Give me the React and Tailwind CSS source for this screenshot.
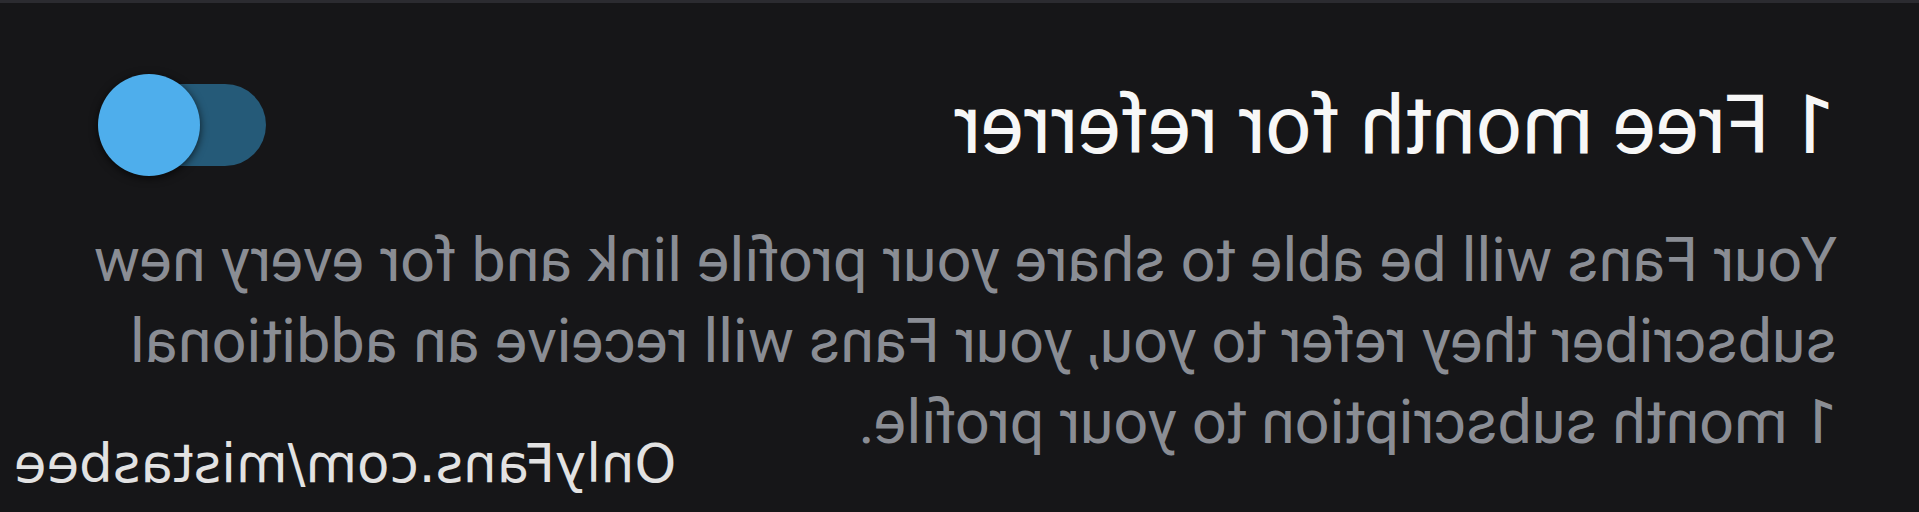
export default function App() {
  return (
    <div className="relative h-[512px] w-full overflow-hidden bg-[#161618] -scale-x-100">
      <div className="h-[3px] bg-[#2b2b30]" />
      <div className="flex items-center justify-between pl-[84px] pr-[98px] pt-[71px]">
        <div
          className="text-[81px] leading-none text-[#f7f7f7]"
          style={{ fontFamily: "Roboto, 'Liberation Sans', sans-serif" }}
        >
          1 Free month for referrer
        </div>
        <div className="relative h-[102px] w-[168px]">
          <div className="absolute left-0 top-[10px] h-[82px] w-[150px] rounded-full bg-[#255a78]" />
          <div className="absolute right-0 top-0 h-[102px] w-[102px] rounded-full bg-[#4eaeec] shadow-[0_2px_8px_rgba(0,0,0,0.7)]" />
        </div>
      </div>
      <p
        className="mt-[44px] whitespace-nowrap pl-[82px] text-[61px] leading-[81px] text-[#8a8d94]"
        style={{ fontFamily: "Roboto, 'Liberation Sans', sans-serif" }}
      >
        Your Fans will be able to share your profile link and for every new
        <br />
        subscriber they refer to you, your Fans will receive an additional
        <br />1 month subscription to your profile.
      </p>
      <div
        className="absolute right-[14px] top-[437px] text-[53px] leading-none text-[#e2e2e2]"
        style={{ fontFamily: "'DejaVu Sans', sans-serif" }}
      >
        OnlyFans.com/mistasbee
      </div>
    </div>
  );
}
